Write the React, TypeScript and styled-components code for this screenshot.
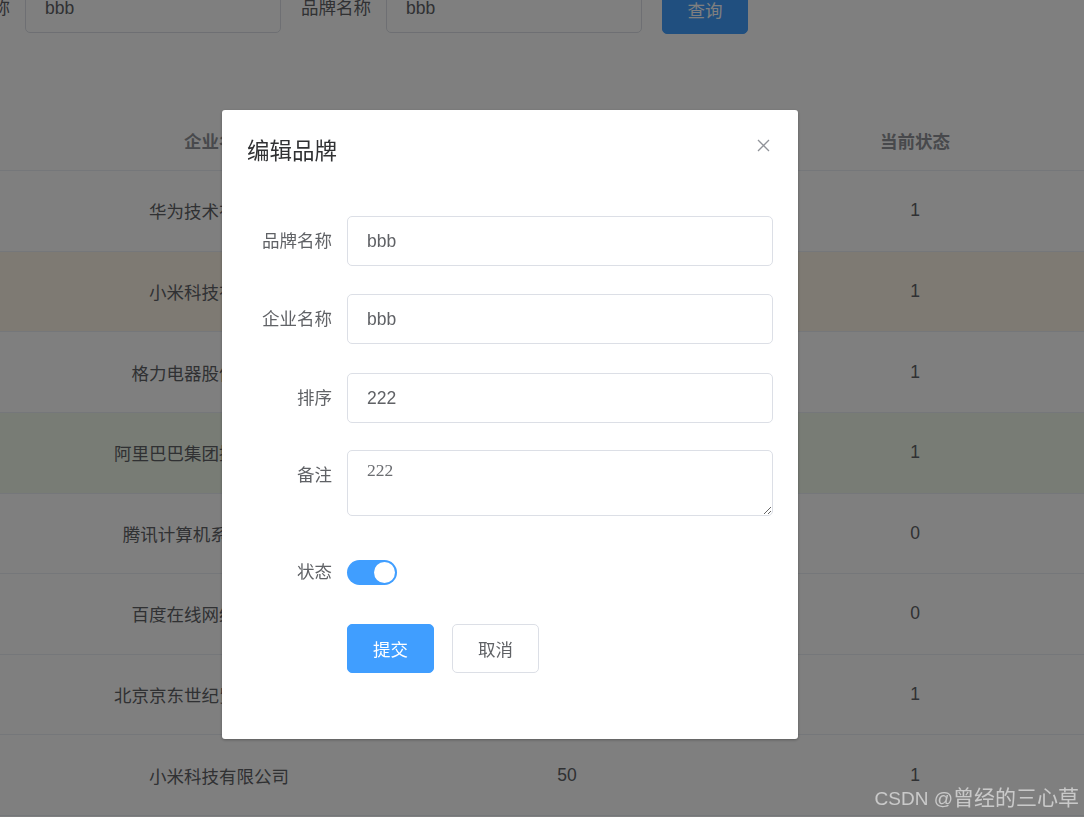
import React from "react";
import styled, { createGlobalStyle } from "styled-components";

const GlobalStyle = createGlobalStyle`
  html, body {
    margin: 0;
    padding: 0;
    background: #ffffff;
    overflow: hidden;
  }
  body {
    width: 1084px;
    height: 817px;
    font-family: "Liberation Sans", "Noto Sans CJK SC", sans-serif;
  }
`;

const Page = styled.div`
  margin: -17px 0 0 -60px;
  width: 1200px;
`;

const SearchForm = styled.div`
  display: flex;
  align-items: center;
  gap: 20px;
  height: 50px;
`;

const SearchField = styled.div`
  display: flex;
  align-items: center;
`;

const SearchLabel = styled.span`
  padding-right: 15px;
  font-size: 17.5px;
  line-height: 50px;
  color: #606266;
`;

const SearchInput = styled.input`
  width: 256px;
  height: 50px;
  box-sizing: border-box;
  border: 1px solid #dcdfe6;
  border-radius: 5px;
  padding: 0 19px;
  font-family: inherit;
  font-size: 17.5px;
  color: #606266;
  outline: none;
`;

const QueryButton = styled.button`
  width: 86px;
  height: 50px;
  margin-top: 2px;
  border: 1px solid #409eff;
  border-radius: 5px;
  background: #409eff;
  color: #ffffff;
  font-family: inherit;
  font-size: 17.5px;
`;

const Table = styled.div`
  margin-top: 77px;
`;

const Row = styled.div<{ $tone?: "warning" | "success"; $head?: boolean }>`
  display: grid;
  grid-template-columns: 105px 348px 348px 348px;
  height: ${(p) => (p.$head ? "61px" : "80.625px")};
  box-sizing: border-box;
  border-bottom: 1px solid #ebeef5;
  background: ${(p) =>
    p.$tone === "warning" ? "#fdf5e6" : p.$tone === "success" ? "#f0f9eb" : "#ffffff"};
`;

const Cell = styled.div<{ $head?: boolean }>`
  display: flex;
  align-items: center;
  justify-content: center;
  font-size: 17.5px;
  font-weight: ${(p) => (p.$head ? 700 : 400)};
  color: ${(p) => (p.$head ? "#909399" : "#606266")};
  white-space: nowrap;
`;

const Overlay = styled.div`
  position: fixed;
  inset: 0;
  background: rgba(0, 0, 0, 0.5);
  padding: 110px 0 0 222px;
  box-sizing: border-box;
`;

const Dialog = styled.div`
  width: 576px;
  background: #ffffff;
  border-radius: 3px;
  box-shadow: 0 1px 3px rgba(0, 0, 0, 0.3);
`;

const DialogHeader = styled.div`
  display: flex;
  justify-content: space-between;
  align-items: flex-start;
  padding: 25px 25px 9px;
`;

const DialogTitle = styled.span`
  font-size: 22.5px;
  line-height: 34px;
  color: #303133;
`;

const CloseButton = styled.button`
  width: 20px;
  height: 20px;
  padding: 0;
  border: 0;
  background: none;
  display: flex;
  align-items: center;
  justify-content: center;
`;

const DialogBody = styled.div`
  padding: 38px 25px 66px;
`;

const FormItem = styled.div<{ $mb: number; $center?: boolean }>`
  display: flex;
  align-items: ${(p) => (p.$center ? "center" : "flex-start")};
  margin-bottom: ${(p) => p.$mb}px;
`;

const FormLabel = styled.label`
  flex-shrink: 0;
  width: 100px;
  box-sizing: border-box;
  padding-right: 15px;
  text-align: right;
  font-size: 17.5px;
  line-height: 50px;
  color: #606266;
`;

const TextInput = styled.input`
  flex: 1;
  min-width: 0;
  height: 50px;
  box-sizing: border-box;
  border: 1px solid #dcdfe6;
  border-radius: 5px;
  padding: 0 19px;
  font-family: "Liberation Sans", "Noto Sans CJK SC", sans-serif;
  font-size: 17.5px;
  color: #606266;
  outline: none;
`;

const TextArea = styled.textarea`
  flex: 1;
  min-width: 0;
  display: block;
  height: 66px;
  box-sizing: border-box;
  border: 1px solid #dcdfe6;
  border-radius: 5px;
  padding: 6px 19px;
  font-family: "Liberation Serif", serif;
  font-size: 17.5px;
  line-height: 1.5;
  color: #6b6d71;
  resize: vertical;
  outline: none;
`;

const Switch = styled.div<{ $on: boolean }>`
  width: 50px;
  height: 25px;
  box-sizing: border-box;
  padding: 2px;
  border-radius: 12.5px;
  background: ${(p) => (p.$on ? "#409eff" : "#dcdfe6")};
  display: flex;
  align-items: center;
  justify-content: ${(p) => (p.$on ? "flex-end" : "flex-start")};
`;

const Knob = styled.span`
  width: 21px;
  height: 21px;
  border-radius: 50%;
  background: #ffffff;
`;

const Actions = styled.div`
  display: flex;
  gap: 18px;
  margin-left: 100px;
`;

const Button = styled.button<{ $primary?: boolean }>`
  width: 87px;
  height: 49px;
  padding: 0;
  box-sizing: border-box;
  border-radius: 5px;
  border: 1px solid ${(p) => (p.$primary ? "#409eff" : "#dcdfe6")};
  background: ${(p) => (p.$primary ? "#409eff" : "#ffffff")};
  color: ${(p) => (p.$primary ? "#ffffff" : "#606266")};
  font-family: inherit;
  font-size: 17.5px;
`;

const Watermark = styled.div`
  position: absolute;
  right: 5px;
  bottom: 6px;
  font-size: 19px;
  line-height: 24px;
  color: rgba(255, 255, 255, 0.58);
  white-space: nowrap;
`;

const WatermarkCjk = styled.span`
  font-size: 21px;
`;

type Brand = {
  company: string;
  ordered: number;
  status: number;
  tone?: "warning" | "success";
};

const brands: Brand[] = [
  { company: "华为技术有限公司", ordered: 100, status: 1 },
  { company: "小米科技有限公司", ordered: 50, status: 1, tone: "warning" },
  { company: "格力电器股份有限公司", ordered: 30, status: 1 },
  { company: "阿里巴巴集团控股有限公司", ordered: 10, status: 1, tone: "success" },
  { company: "腾讯计算机系统有限公司", ordered: 50, status: 0 },
  { company: "百度在线网络技术公司", ordered: 5, status: 0 },
  { company: "北京京东世纪贸易有限公司", ordered: 40, status: 1 },
  { company: "小米科技有限公司", ordered: 50, status: 1 },
];

export default function App() {
  return (
    <>
      <GlobalStyle />
      <Page>
        <SearchForm>
          <SearchField>
            <SearchLabel>企业名称</SearchLabel>
            <SearchInput defaultValue="bbb" />
          </SearchField>
          <SearchField>
            <SearchLabel>品牌名称</SearchLabel>
            <SearchInput defaultValue="bbb" />
          </SearchField>
          <QueryButton>查询</QueryButton>
        </SearchForm>
        <Table>
          <Row $head>
            <Cell $head />
            <Cell $head>企业名称</Cell>
            <Cell $head>排序</Cell>
            <Cell $head>当前状态</Cell>
          </Row>
          {brands.map((b, i) => (
            <Row key={i} $tone={b.tone}>
              <Cell />
              <Cell>{b.company}</Cell>
              <Cell>{b.ordered}</Cell>
              <Cell>{b.status}</Cell>
            </Row>
          ))}
        </Table>
      </Page>
      <Overlay>
        <Dialog>
          <DialogHeader>
            <DialogTitle>编辑品牌</DialogTitle>
            <CloseButton aria-label="close">
              <svg width="13" height="13" viewBox="0 0 13 13">
                <path d="M1 1 L12 12 M12 1 L1 12" stroke="#909399" strokeWidth="1.3" fill="none" />
              </svg>
            </CloseButton>
          </DialogHeader>
          <DialogBody>
            <FormItem $mb={28}>
              <FormLabel>品牌名称</FormLabel>
              <TextInput defaultValue="bbb" />
            </FormItem>
            <FormItem $mb={29}>
              <FormLabel>企业名称</FormLabel>
              <TextInput defaultValue="bbb" />
            </FormItem>
            <FormItem $mb={27}>
              <FormLabel>排序</FormLabel>
              <TextInput defaultValue="222" />
            </FormItem>
            <FormItem $mb={31}>
              <FormLabel>备注</FormLabel>
              <TextArea defaultValue="222" />
            </FormItem>
            <FormItem $mb={27} $center>
              <FormLabel>状态</FormLabel>
              <Switch $on>
                <Knob />
              </Switch>
            </FormItem>
            <Actions>
              <Button $primary>提交</Button>
              <Button>取消</Button>
            </Actions>
          </DialogBody>
        </Dialog>
        <Watermark>
          CSDN @<WatermarkCjk>曾经的三心草</WatermarkCjk>
        </Watermark>
      </Overlay>
    </>
  );
}
